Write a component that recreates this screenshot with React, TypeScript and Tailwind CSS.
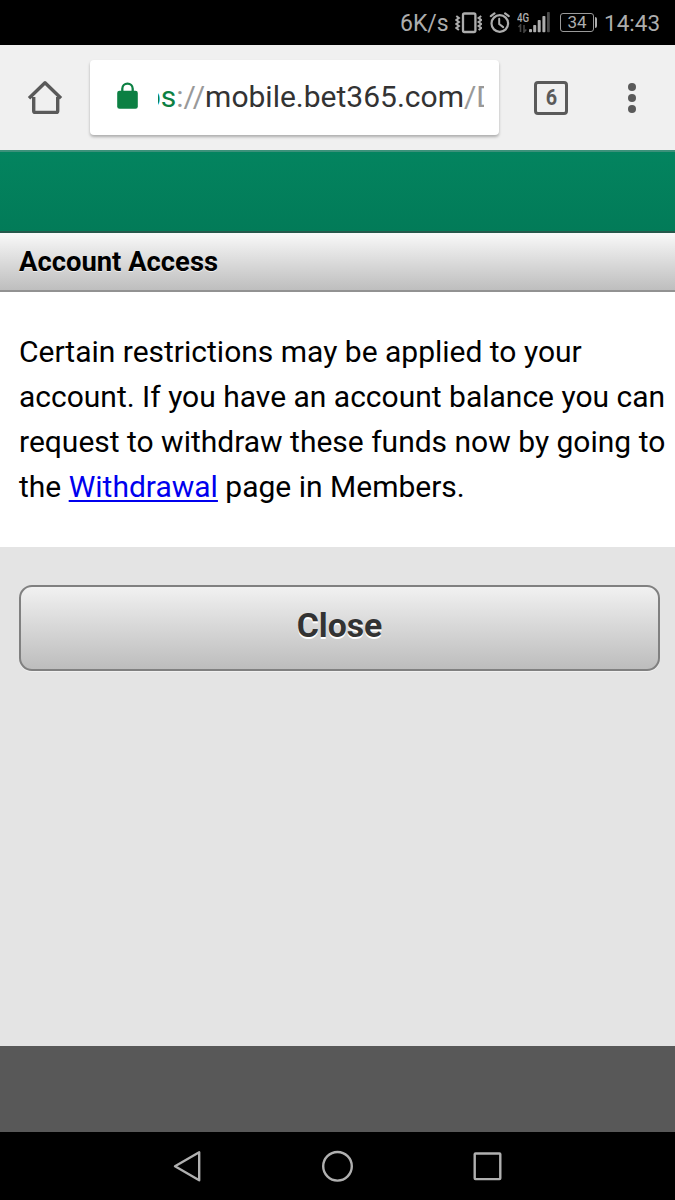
import React from 'react';

const StatusBar = () => (
  <header className="flex h-[45px] shrink-0 items-center bg-black pl-[400px] text-[#adadad]">
    <span className="w-[55px] pt-[2px] whitespace-nowrap text-[23px] leading-none">6K/s</span>
    {/* vibrate */}
    <svg width="27" height="24" viewBox="455 11 27 24" className="shrink-0" fill="none" stroke="#adadad">
      <rect x="463" y="13.5" width="12.4" height="18.5" rx="1.5" strokeWidth="2.3" />
      <path d="M456.3 16l2.6 2-2.6 2 2.6 2-2.6 2 2.6 2-2.6 2 2.6 2M481.2 16l-2.6 2 2.6 2-2.6 2 2.6 2-2.6 2 2.6 2-2.6 2" strokeWidth="2" />
    </svg>
    {/* alarm */}
    <svg width="31" height="24" viewBox="486 11 31 24" className="ml-1 shrink-0" fill="none" stroke="#adadad" strokeLinecap="round">
      <circle cx="499.8" cy="23.5" r="8.3" strokeWidth="2.2" />
      <path d="M499.2 18.8v5.3l4 3" strokeWidth="2" />
      <path d="M490.8 16.2l3.7-2.8M508.8 16.2l-3.7-2.8" strokeWidth="2.1" />
    </svg>
    <div className="flex w-[43px] items-end self-stretch pb-[12.5px]">
      <div className="flex w-[12px] flex-col">
        <span className="origin-left scale-x-75 text-[13px] leading-[12px] font-medium">4G</span>
        <svg width="12" height="9" viewBox="0 0 12 9" fill="none" stroke="#444" strokeWidth="1.6">
          <path d="M3.5 8V1L1.5 3M7 1v7l2.3-2.5" />
        </svg>
      </div>
      <svg width="22" height="21" viewBox="529 12 22 21" className="shrink-0" fill="#adadad">
        <rect x="529" y="29" width="3" height="3.2" rx=".8" />
        <rect x="533.2" y="25" width="3" height="7.2" rx=".8" />
        <rect x="537.7" y="20" width="3" height="12.2" rx=".8" />
        <rect x="542.4" y="16" width="3" height="16.2" rx=".8" />
        <rect x="547" y="12" width="2.8" height="20.2" rx=".8" fill="#4a4a4a" />
      </svg>
    </div>
    <div className="flex w-[44px] items-center">
      <div className="flex h-[19px] w-[34px] items-center justify-center rounded-[3px] border-[1.5px] border-[#9a9a9a] text-[17px] leading-none">
        34
      </div>
      <div className="ml-[1px] h-[11px] w-[2px] rounded-r-sm bg-[#adadad]" />
    </div>
    <span className="pt-[2px] text-[22.5px] leading-none">14:43</span>
  </header>
);

const BrowserBar = () => (
  <div className="flex h-[105px] shrink-0 items-center bg-[#f0f0f0] text-[#5a5a5a]">
    <svg width="36" height="36" viewBox="27 80 36 36" className="ml-[27px]" fill="none" stroke="#5a5a5a" strokeWidth="3.4">
      <path d="M33.7 97v14q0 1.4 1.4 1.4h21.2q1.4 0 1.4-1.4V97" />
      <path d="M29 98.2L45 82.7l16 15.5" strokeLinejoin="round" />
    </svg>
    <div className="ml-[27px] flex h-[75px] w-[409px] items-center rounded-[4px] bg-white shadow-[0_2px_3px_rgba(0,0,0,0.28)]">
      <svg width="22" height="28" viewBox="116 82 22 28" className="mb-[3px] ml-[26px] shrink-0">
        <path d="M122.3 93v-4.2a5.2 5.2 0 0 1 10.4 0V93" fill="none" stroke="#0c8043" strokeWidth="2.3" />
        <rect x="117.2" y="90.7" width="20.6" height="18" rx="2.3" fill="#0c8043" />
      </svg>
      <div className="mb-[2px] ml-5 w-[326px] overflow-hidden">
        <div className="-ml-[14px] text-[30px] leading-[40px] whitespace-nowrap text-[#333]">
          <span className="text-[#0c8043]">ps</span>
          <span className="text-[#999]">://</span>
          mobile.bet365.com
          <span className="text-[#999]">/D</span>
        </div>
      </div>
    </div>
    <div className="ml-[35px] flex size-[34px] items-center justify-center rounded-[4px] border-[3.5px] border-[#5a5a5a]">
      <span className="scale-x-90 text-[22px] leading-none font-bold">6</span>
    </div>
    <svg width="10" height="30" viewBox="0 0 10 30" className="ml-[59px]" fill="#5a5a5a">
      <circle cx="5" cy="4" r="4" />
      <circle cx="5" cy="15" r="4" />
      <circle cx="5" cy="26" r="4" />
    </svg>
  </div>
);

const NavBar = () => (
  <nav className="flex h-[68px] shrink-0 items-center bg-black">
    <svg width="675" height="68" viewBox="0 1132 675 68" fill="none" stroke="#b0b0b0" strokeWidth="2.4" strokeLinejoin="round">
      <path d="M175 1166.3l24.2-14v28z" />
      <circle cx="337.5" cy="1166.3" r="14.3" />
      <rect x="474.7" y="1153.5" width="25.6" height="25.6" rx=".8" />
    </svg>
  </nav>
);

export default function App() {
  return (
    <div className="flex h-[1200px] w-[675px] flex-col overflow-hidden bg-[#e4e4e4] font-['Roboto',sans-serif] text-black">
      <StatusBar />
      <BrowserBar />
      <div className="h-[83px] shrink-0 border-t-2 border-b-2 border-t-[#3c917a] border-b-[#25584b] bg-linear-to-b from-[#03845f] to-[#027b58]" />
      <h1 className="flex h-[59px] shrink-0 items-center border-b-2 border-[#929292] bg-linear-to-b from-[#f9f9f9] to-[#bebebe] pt-[3px] pl-[19px] text-[27.4px] font-bold text-shadow-[0_1px_0_#eee]">
        Account Access
      </h1>
      <main className="flex grow flex-col">
        <p className="h-[255px] bg-white pt-[37px] pl-[19px] text-[30px] leading-[45px] whitespace-nowrap">
          Certain restrictions may be applied to your
          <br />
          account. If you have an account balance you can
          <br />
          request to withdraw these funds now by going to
          <br />
          the <a href="#" className="text-[#0000ee] underline decoration-2 underline-offset-[3px]">Withdrawal</a> page in Members.
        </p>
        <button className="mt-[38px] ml-[19px] h-[86px] w-[641px] rounded-[13px] border-2 border-[#808080] bg-linear-to-b from-[#f1f1f1] to-[#bdbdbd] pb-[4px] text-[33.8px] font-bold text-[#333] shadow-[0_1px_0_#f0f0f0] text-shadow-[0_2px_0_#fff]">
          Close
        </button>
      </main>
      <footer className="h-[86px] shrink-0 bg-[#585858]" />
      <NavBar />
    </div>
  );
}
